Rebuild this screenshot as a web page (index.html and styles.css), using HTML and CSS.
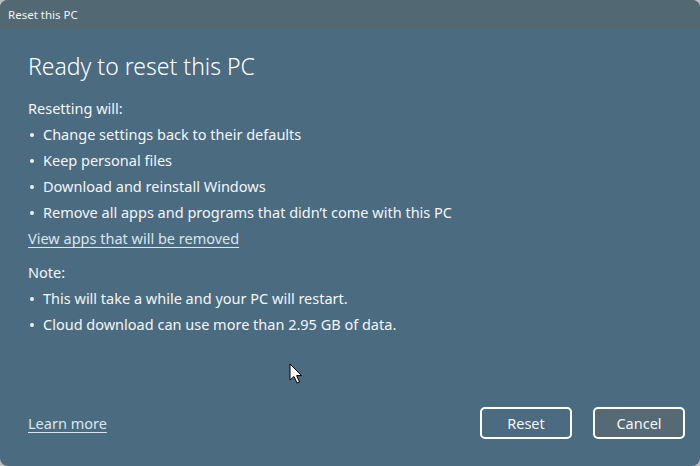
FILE: index.html
```html
<!DOCTYPE html>
<html>
<head>
<meta charset="utf-8">
<link rel="stylesheet" href="styles.css">
</head>
<body>
<div class="window">
  <div class="titlebar">Reset this PC</div>
  <div class="content">
    <h1 class="heading">Ready to reset this PC</h1>
    <div class="section">
      <div class="line">Resetting will:</div>
      <div class="line bullet"><span class="dot"></span>Change settings back to their defaults</div>
      <div class="line bullet"><span class="dot"></span>Keep personal files</div>
      <div class="line bullet"><span class="dot"></span>Download and reinstall Windows</div>
      <div class="line bullet"><span class="dot"></span>Remove all apps and programs that didn’t come with this PC</div>
      <div class="line"><a class="link">View apps that will be removed</a></div>
    </div>
    <div class="section note">
      <div class="line">Note:</div>
      <div class="line bullet"><span class="dot"></span>This will take a while and your PC will restart.</div>
      <div class="line bullet"><span class="dot"></span>Cloud download can use more than 2.95 GB of data.</div>
    </div>
    <div class="spacer"></div>
    <div class="footer">
      <a class="link">Learn more</a>
      <div class="buttons">
        <button class="btn">Reset</button>
        <button class="btn cancel">Cancel</button>
      </div>
    </div>
  </div>
  <svg class="cursor" width="14" height="22" viewBox="0 0 14 22">
    <path d="M1 1 L1 17 L5 13.5 L8 20 L10.5 19 L7.6 12.6 L12.5 12.6 Z" fill="#fff" stroke="#000" stroke-width="1" stroke-linejoin="round"/>
  </svg>
</div>
</body>
</html>
```
FILE: styles.css
```css
html, body {
  margin: 0;
  padding: 0;
  background: #b9bcbe;
}
body {
  width: 700px;
  height: 466px;
  overflow: hidden;
  font-family: "Noto Sans", "Open Sans", sans-serif;
}
.window {
  position: relative;
  width: 700px;
  height: 466px;
  border-radius: 8px;
  overflow: hidden;
  background: #4a6b80;
  display: flex;
  flex-direction: column;
}
.titlebar {
  height: 29px;
  background: #526873;
  color: #f2f4f5;
  font-size: 11.5px;
  line-height: 29px;
  padding-left: 8px;
  flex: none;
}
.content {
  flex: 1;
  display: flex;
  flex-direction: column;
  padding: 21px 15px 27px 28px;
  color: #f4f6f7;
}
.heading {
  margin: 0;
  font-weight: 300;
  font-size: 23px;
  line-height: 32px;
  color: #ffffff;
}
.section {
  margin-top: 13px;
  font-size: 14.5px;
}
.note {
  margin-top: 8px;
}
.line {
  height: 26px;
  line-height: 26px;
  white-space: nowrap;
}
.bullet {
  padding-left: 15px;
  position: relative;
}
.dot {
  position: absolute;
  left: 2px;
  top: 12px;
  width: 4px;
  height: 4px;
  border-radius: 50%;
  background: #eef2f4;
}
.link {
  color: #dbe5ec;
  text-decoration: underline;
  text-underline-offset: 3px;
  text-decoration-thickness: 1px;
  font-size: 14.5px;
}
.spacer {
  flex: 1;
}
.footer {
  display: flex;
  align-items: center;
  justify-content: space-between;
}
.buttons {
  display: flex;
  gap: 21px;
}
.btn {
  width: 92px;
  height: 32px;
  border: 2px solid #ffffff;
  border-radius: 5px;
  background: transparent;
  color: #f4f6f7;
  font-family: "Noto Sans", "Open Sans", sans-serif;
  font-size: 14.5px;
  padding: 0;
}
.cancel {
  background: #566a75;
}
.cursor {
  position: absolute;
  left: 289px;
  top: 363px;
}
```
